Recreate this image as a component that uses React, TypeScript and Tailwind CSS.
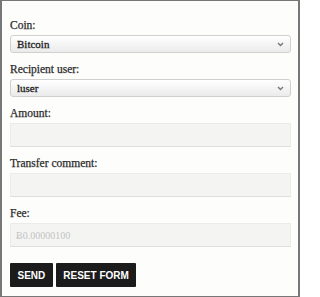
const serif = { fontFamily: '"Liberation Serif", "DejaVu Serif", serif' };
const sans = { fontFamily: '"Liberation Sans", Arial, sans-serif' };

function Label({ children }: { children: React.ReactNode }) {
  return (
    <label className="block h-[18px] pt-[1px] text-[11.5px] leading-[14px] text-[#2b2b2b] [-webkit-text-stroke:0.25px_#2b2b2b]" style={serif}>
      {children}
    </label>
  );
}

function Select({ value }: { value: string }) {
  return (
    <div className="h-[18px] rounded-[3px] border border-[#d0d0d0] bg-gradient-to-b from-white to-[#ebebeb] flex items-center pl-[6px] pr-[6px] text-[11px] text-[#222] [-webkit-text-stroke:0.3px_#222]" style={serif}>
      <span className="flex-1">{value}</span>
      <svg width="7" height="5" viewBox="0 0 7 5" className="text-[#777]">
        <path d="M1 1 L3.5 3.5 L6 1" fill="none" stroke="currentColor" strokeWidth="1.4" />
      </svg>
    </div>
  );
}

function Input({ placeholder }: { placeholder?: string }) {
  return (
    <div className="h-[24px] border border-[#ebebe9] border-b-[#dededc] bg-[#f4f5f3] flex items-center px-[5px] text-[10px] text-[#c2c2c2]" style={serif}>
      {placeholder}
    </div>
  );
}

export default function App() {
  return (
    <div className="w-[300px] h-[297px] bg-[#fdfdfb] border-t border-l-2 border-r-2 border-b border-[#777] pl-[8px] pr-[7px] pt-[16px]">
      <div className="flex flex-col gap-[8px]">
        <div>
          <Label>Coin:</Label>
          <Select value="Bitcoin" />
        </div>
        <div>
          <Label>Recipient user:</Label>
          <Select value="luser" />
        </div>
        <div>
          <Label>Amount:</Label>
          <Input />
        </div>
        <div>
          <Label>Transfer comment:</Label>
          <Input />
        </div>
        <div>
          <Label>Fee:</Label>
          <Input placeholder="Ƀ0.00000100" />
        </div>
      </div>
      <div className="flex gap-[3px] mt-[16px]">
        <button className="h-[24px] px-[7.5px] bg-[#1b1b1b] text-white text-[10px] font-bold rounded-[1px]" style={sans}>
          SEND
        </button>
        <button className="h-[24px] px-[7.5px] bg-[#1b1b1b] text-white text-[10px] font-bold rounded-[1px]" style={sans}>
          RESET FORM
        </button>
      </div>
    </div>
  );
}
